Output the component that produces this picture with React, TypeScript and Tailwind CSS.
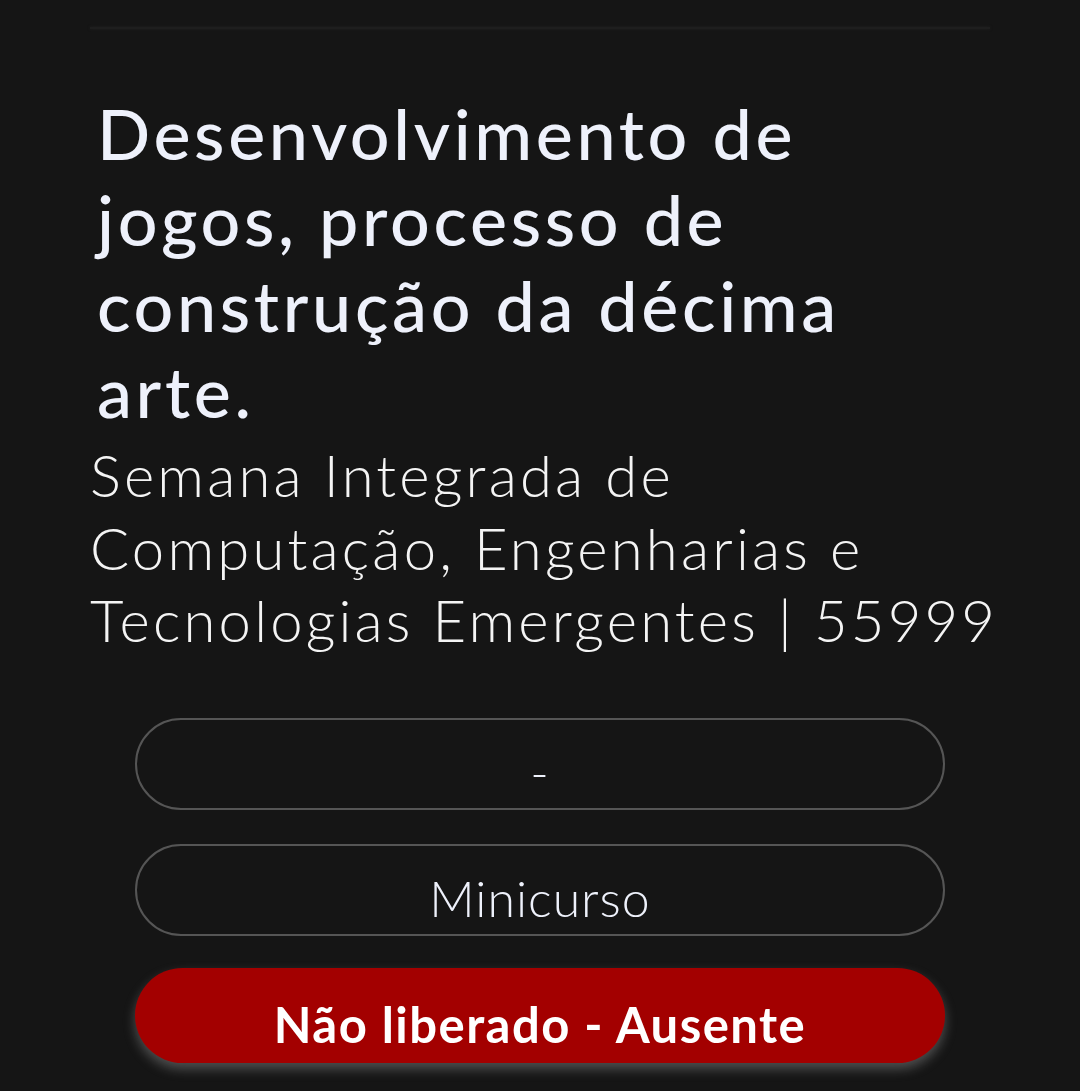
export default function App() {
  return (
    <div className="min-h-[1091px] w-full bg-[#151515] font-['Lato',sans-serif]">
      <div className="mx-auto w-[900px] pt-[27px]">
        {/* divider */}
        <div className="h-[2px] w-full bg-[#1e1e1e] shadow-[0_0_3px_rgba(40,40,40,0.8)]" />

        {/* title */}
        <h1 className="mt-[61px] w-[870px] pl-[7px] text-[70px] font-medium leading-[86px] tracking-[0.052em] text-[#eef1fb]">
          Desenvolvimento de jogos, processo de construção da décima arte.
        </h1>

        {/* event */}
        <p className="mr-[-30px] mt-[5px] text-[58px] font-light leading-[72.5px] tracking-[0.055em] text-[#f4f4f4]">
          Semana Integrada de Computação, Engenharias e Tecnologias Emergentes | 55999
        </p>

        {/* info pills */}
        <div className="mt-[61px] flex flex-col px-[45px]">
          <div className="flex h-[92px] items-center justify-center rounded-full border-2 border-[#555555] pt-[16px] text-[50px] font-light leading-[60px] tracking-[0.02em] text-[#eef1fb]">
            -
          </div>
          <div className="mt-[34px] flex h-[92px] items-center justify-center rounded-full border-2 border-[#555555] pt-[16px] text-[50px] font-light leading-[60px] tracking-[0.02em] text-[#eef1fb]">
            Minicurso
          </div>
          <div className="mt-[32px] flex h-[95px] items-center justify-center rounded-full bg-[#a30000] pt-[18px] text-[49px] font-bold leading-[59px] tracking-[0.03em] text-white shadow-[0_6px_12px_rgba(190,190,190,0.35)]">
            Não liberado - Ausente
          </div>
        </div>
      </div>
    </div>
  );
}
